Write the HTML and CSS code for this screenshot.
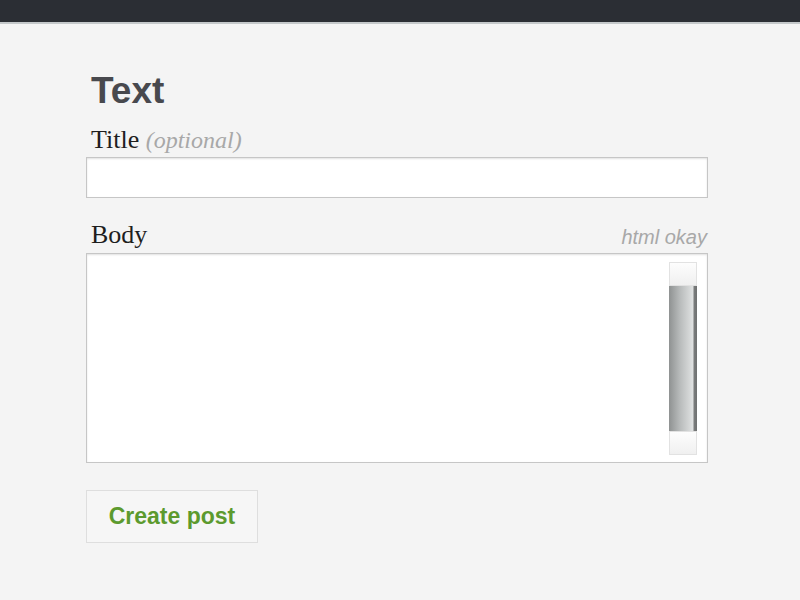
FILE: index.html
```html
<!DOCTYPE html>
<html>
<head>
<meta charset="utf-8">
<link rel="stylesheet" href="styles.css">
</head>
<body>
<div class="topbar"></div>
<main class="page">
  <h1 class="heading">Text</h1>
  <form class="form">
    <div class="field">
      <label class="label">Title <em class="hint">(optional)</em></label>
      <div class="input"></div>
    </div>
    <div class="field">
      <div class="label-row">
        <label class="label">Body</label>
        <span class="note">html okay</span>
      </div>
      <div class="area">
        <div class="area-text"></div>
        <div class="scrollbar">
          <div class="cap"></div>
          <div class="thumb"></div>
          <div class="cap"></div>
        </div>
      </div>
    </div>
    <div class="actions">
      <button type="button" class="button">Create post</button>
    </div>
  </form>
</main>
</body>
</html>
```

FILE: styles.css
```css
html, body {
  margin: 0;
  padding: 0;
  background: #f4f4f4;
}
body {
  font-family: "Liberation Sans", Arial, sans-serif;
}
.topbar {
  height: 22px;
  background: #2b2e34;
  border-bottom: 2px solid #c4c8ca;
}
.page {
  width: 622px;
  margin-left: 86px;
  padding-top: 47px;
}
.heading {
  margin: 0 0 0 5px;
  font-size: 37px;
  line-height: 40px;
  font-weight: bold;
  color: #48494e;
}
.form {
  display: flex;
  flex-direction: column;
  margin-top: 14px;
}
.field {
  display: flex;
  flex-direction: column;
}
.label {
  font-family: "Liberation Serif", "Times New Roman", serif;
  font-size: 26px;
  line-height: 30px;
  color: #1e1e1e;
  margin-left: 5px;
}
.hint {
  color: #a8a8a8;
  font-size: 24px;
}
.input {
  height: 39px;
  margin-top: 2px;
  background: #fff;
  border: 1px solid #c6c6c6;
  box-shadow: inset 0 1px 2px rgba(0,0,0,0.12);
}
.field + .field {
  margin-top: 22px;
}
.label-row {
  display: flex;
  justify-content: space-between;
  align-items: flex-end;
}
.note {
  font-style: italic;
  font-size: 20px;
  color: #a8a8a8;
  margin-right: 1px;
  line-height: 26px;
}
.area {
  margin-top: 3px;
  background: #fff;
  border: 1px solid #c6c6c6;
  box-shadow: inset 0 1px 2px rgba(0,0,0,0.12);
  display: flex;
  padding: 8px 10px 7px 0;
  box-sizing: border-box;
  height: 210px;
}
.area-text {
  flex: 1;
}
.scrollbar {
  width: 28px;
  display: flex;
  flex-direction: column;
}
.cap {
  height: 24px;
  background: linear-gradient(#fdfdfd, #f0f0f0);
  border: 1px solid #e2e2e2;
  box-sizing: border-box;
}
.thumb {
  flex: 1;
  background: linear-gradient(to right, #8f9292 0%, #b9bcbc 40%, #dfe1e1 85%, #7a7c7c 90%, #6e7070 100%);
}
.actions {
  margin-top: 27px;
  display: flex;
}
.button {
  width: 172px;
  height: 53px;
  background: #f6f6f6;
  border: 1px solid #dedede;
  font-family: "Liberation Sans", Arial, sans-serif;
  font-weight: bold;
  font-size: 23px;
  color: #5c9a2e;
  padding: 0;
}
```
